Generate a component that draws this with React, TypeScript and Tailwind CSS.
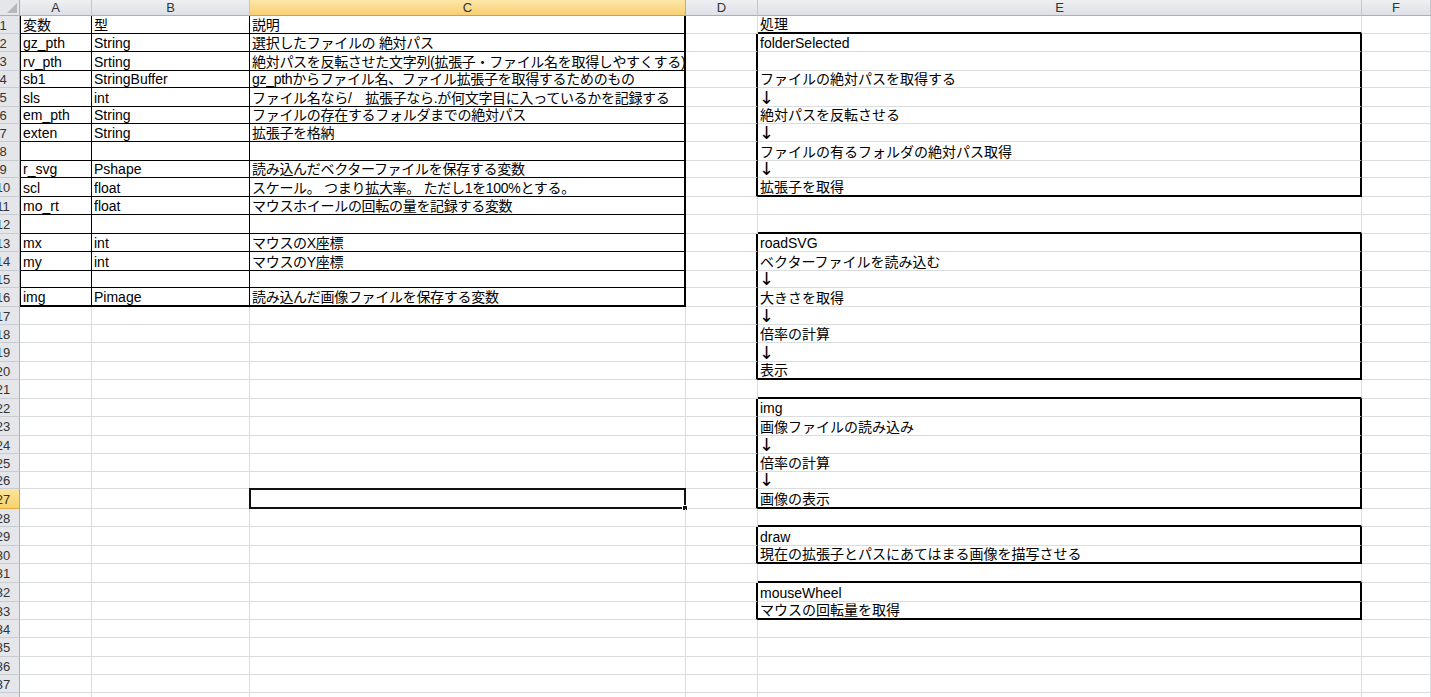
import React from "react";

// row tops measured off the sheet, in px; heights are the differences
const rowTops = [16, 34, 52, 71, 88, 107, 124, 142, 161, 178, 197, 215, 234, 252, 271, 288, 307, 325, 343, 362, 380, 399, 417, 436, 454, 472, 489, 509, 527, 546, 564, 583, 602, 620, 638, 657, 675, 693, 712];

const heightClass: Record<number, string> = {
  17: "h-[17px]",
  18: "h-[18px]",
  19: "h-[19px]",
  20: "h-[20px]",
};

const variables: [string, string, string][] = [
  ["変数", "型", "説明"],
  ["gz_pth", "String", "選択したファイルの 絶対パス"],
  ["rv_pth", "Srting", "絶対パスを反転させた文字列(拡張子・ファイル名を取得しやすくする)"],
  ["sb1", "StringBuffer", "gz_pthからファイル名、ファイル拡張子を取得するためのもの"],
  ["sls", "int", "ファイル名なら/　拡張子なら.が何文字目に入っているかを記録する"],
  ["em_pth", "String", "ファイルの存在するフォルダまでの絶対パス"],
  ["exten", "String", "拡張子を格納"],
  ["", "", ""],
  ["r_svg", "Pshape", "読み込んだベクターファイルを保存する変数"],
  ["scl", "float", "スケール。 つまり拡大率。 ただし1を100%とする。"],
  ["mo_rt", "float", "マウスホイールの回転の量を記録する変数"],
  ["", "", ""],
  ["mx", "int", "マウスのX座標"],
  ["my", "int", "マウスのY座標"],
  ["", "", ""],
  ["img", "Pimage", "読み込んだ画像ファイルを保存する変数"],
];

const processText: Record<number, string> = {
  1: "処理",
  2: "folderSelected",
  4: "ファイルの絶対パスを取得する",
  5: "↓",
  6: "絶対パスを反転させる",
  7: "↓",
  8: "ファイルの有るフォルダの絶対パス取得",
  9: "↓",
  10: "拡張子を取得",
  13: "roadSVG",
  14: "ベクターファイルを読み込む",
  15: "↓",
  16: "大きさを取得",
  17: "↓",
  18: "倍率の計算",
  19: "↓",
  20: "表示",
  22: "img",
  23: "画像ファイルの読み込み",
  24: "↓",
  25: "倍率の計算",
  26: "↓",
  27: "画像の表示",
  29: "draw",
  30: "現在の拡張子とパスにあてはまる画像を描写させる",
  32: "mouseWheel",
  33: "マウスの回転量を取得",
};

const boxes: [number, number][] = [
  [2, 10],
  [13, 20],
  [22, 27],
  [29, 30],
  [32, 33],
];

const font = "font-['Liberation_Sans','Noto_Sans_CJK_JP',sans-serif]";
const GRID = "border-[#dadcdd]";

function boxOf(r: number) {
  return boxes.find(([s, e]) => r >= s && r <= e);
}

function CellText({ text, tight }: { text?: string; tight?: boolean }) {
  if (text === "↓") {
    return (
      <span className="leading-[16px] pl-[1px] text-[18px] text-black font-['DejaVu_Sans',sans-serif]">
        ↓
      </span>
    );
  }
  return (
    <span className={`whitespace-nowrap leading-[16px] pl-[2px] ${tight ? "tracking-[-0.3px]" : ""}`}>
      {text}
    </span>
  );
}

function ColHeader({ label, w, active }: { label: string; w: string; active?: boolean }) {
  return (
    <div
      className={`${w} h-full shrink-0 flex items-center justify-center text-[13px] text-[#333] border-r ${
        active
          ? "bg-linear-to-b from-[#fde7a8] to-[#f7cf73] border-r-[#e0a94a] border-b border-b-[#e39d2b]"
          : "bg-linear-to-b from-[#eef0f3] to-[#dde0e5] border-r-[#c3c7cd] border-b border-b-[#a9b0b9]"
      }`}
    >
      {label}
    </div>
  );
}

function Row({ r }: { r: number }) {
  const h = rowTops[r] - rowTops[r - 1];
  const inTable = r <= 16;
  const v = inTable ? variables[r - 1] : ["", "", ""];
  const lastTable = r === 16;
  const tBottom = inTable
    ? lastTable
      ? "border-b-2 border-b-black"
      : "border-b border-b-black"
    : `border-b ${GRID}`;

  const box = boxOf(r);
  const nextStarts = boxes.some(([s]) => s === r + 1);
  const eRight = box ? "border-r-2 border-r-black" : `border-r ${GRID}`;
  const eBottom =
    (box && box[1] === r) || nextStarts ? "border-b-2 border-b-black" : `border-b ${GRID}`;
  const dRight = box ? "border-r-2 border-r-black" : `border-r ${GRID}`;
  const selected = r === 27;

  return (
    <div className={`flex ${heightClass[h] ?? "h-[18px]"}`}>
      <div
        className={`w-[20px] shrink-0 overflow-hidden border-r border-b ${
          selected
            ? "bg-linear-to-b from-[#fde59f] to-[#f9d266] border-r-[#e39d2b] border-b-[#e0a94a]"
            : "bg-[#e4e6ea] border-r-[#a9b0b9] border-b-[#c8ccd2]"
        }`}
      >
        <div className="w-[30px] -ml-[12px] h-full flex items-center justify-center text-[13px] text-[#333] leading-none pt-[1px]">
          {r}
        </div>
      </div>
      <div
        className={`w-[72px] shrink-0 flex items-end ${
          inTable ? "border-l border-l-black border-r border-r-black" : `border-r ${GRID}`
        } ${tBottom}`}
      >
        <CellText text={v[0]} />
      </div>
      <div
        className={`w-[158px] shrink-0 flex items-end ${
          inTable ? "border-r border-r-black" : `border-r ${GRID}`
        } ${tBottom}`}
      >
        <CellText text={v[1]} />
      </div>
      <div
        className={`relative w-[436px] shrink-0 flex items-end ${
          inTable ? "border-r-2 border-r-black" : `border-r ${GRID}`
        } ${tBottom}`}
      >
        <CellText text={v[2]} tight />
        {selected && (
          <>
            <div className="absolute -left-[1px] -top-[1px] -right-[1px] -bottom-[1px] border-2 border-[#111]" />
            <div className="absolute -right-[3px] -bottom-[3px] w-[6px] h-[6px] bg-[#111] border border-white" />
          </>
        )}
      </div>
      <div className={`w-[72px] shrink-0 ${dRight} border-b ${GRID}`} />
      <div className={`w-[604px] shrink-0 flex items-end ${eRight} ${eBottom}`}>
        <CellText text={processText[r]} />
      </div>
      <div className={`flex-1 border-r border-b ${GRID}`} />
    </div>
  );
}

export default function App() {
  const rows = Array.from({ length: 38 }, (_, i) => i + 1);
  return (
    <div className={`w-[1431px] h-[697px] overflow-hidden bg-white text-black text-[14px] ${font}`}>
      <div className="flex h-[16px]">
        <div className="w-[20px] shrink-0 relative bg-[#e4e6ea] border-r border-r-[#a9b0b9] border-b border-b-[#a9b0b9]">
          <svg className="absolute right-[2px] bottom-[2px]" width="10" height="10" viewBox="0 0 10 10">
            <polygon points="10,0 10,10 0,10" fill="#b4b9c0" />
          </svg>
        </div>
        <ColHeader label="A" w="w-[72px]" />
        <ColHeader label="B" w="w-[158px]" />
        <ColHeader label="C" w="w-[436px]" active />
        <ColHeader label="D" w="w-[72px]" />
        <ColHeader label="E" w="w-[604px]" />
        <ColHeader label="F" w="flex-1" />
      </div>
      {rows.map((r) => (
        <Row key={r} r={r} />
      ))}
    </div>
  );
}
